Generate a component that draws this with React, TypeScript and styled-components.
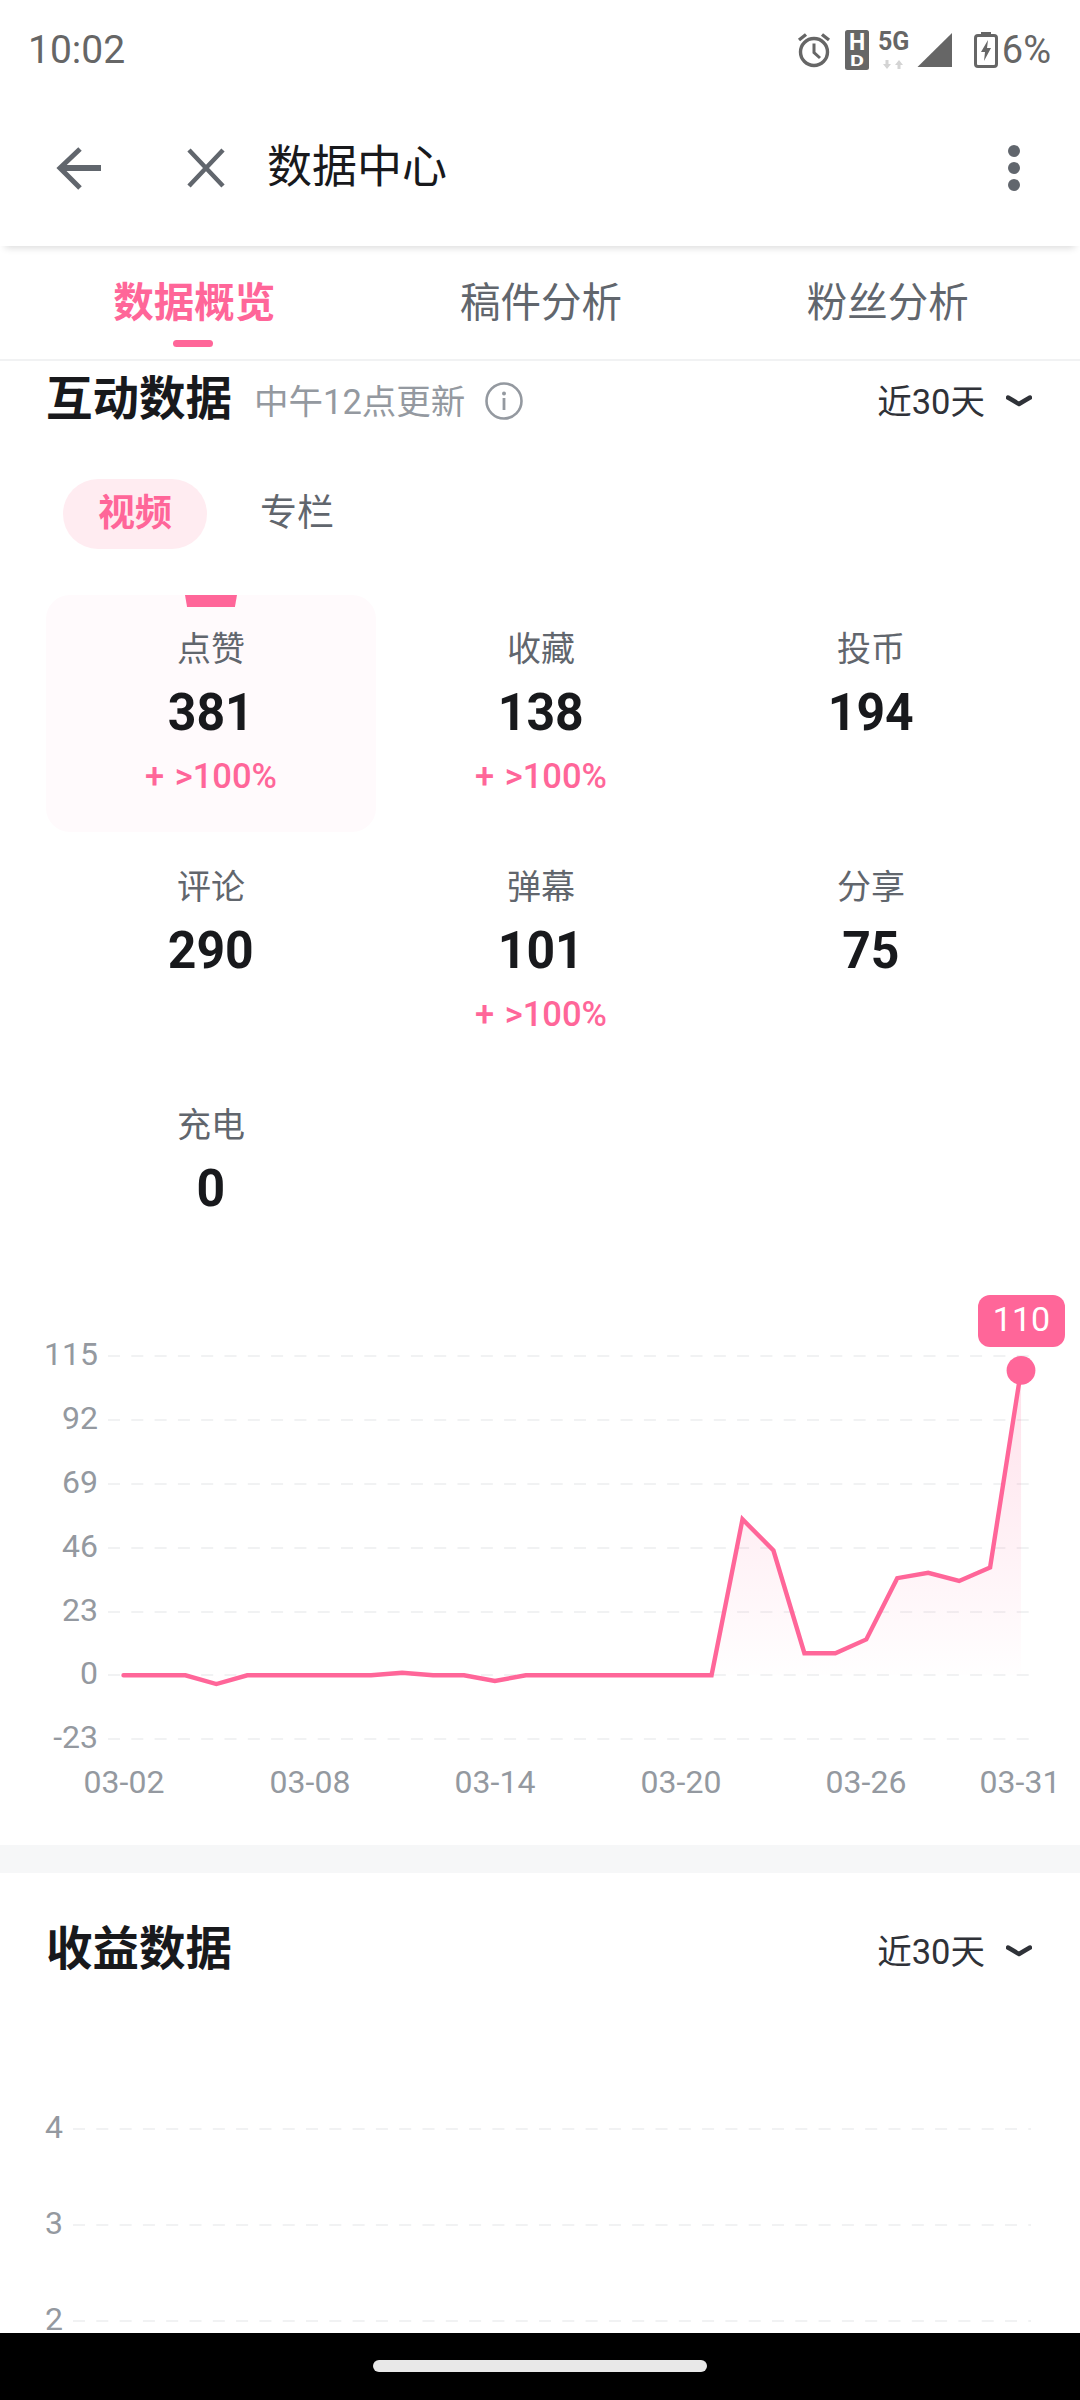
import React from 'react';
import styled, { createGlobalStyle } from 'styled-components';

const pink = '#ff6699';
const grayText = '#61666d';
const lightText = '#9499a0';

const GlobalStyle = createGlobalStyle`
  html, body {
    margin: 0;
    padding: 0;
    background: #fff;
  }
  * {
    box-sizing: border-box;
  }
`;

const stats = [
  { label: '点赞', value: '381', change: '+ >100%', active: true },
  { label: '收藏', value: '138', change: '+ >100%' },
  { label: '投币', value: '194' },
  { label: '评论', value: '290' },
  { label: '弹幕', value: '101', change: '+ >100%' },
  { label: '分享', value: '75' },
  { label: '充电', value: '0' },
];

const base = 1675.3;
const lineYs: number[] = [
  base, base, base, 1684, base, base, base, base, base, 1672.8, base, base, 1681, base, base,
  base, base, base, base, base, 1519.3, 1550.5, 1653.2, 1653.2, 1639.4, 1578.2, 1572.8, 1580.9, 1567.4, 1370.3,
];
const lineXs = lineYs.map((_, i) => 123.5 + i * 30.95);
const linePoints = lineYs.map((y, i) => `${lineXs[i]},${y}`).join(' ');
const areaPoints = `123.5,${base} ${linePoints} ${lineXs[29]},${base}`;

const yTicks = [
  { label: '115', y: 1356 },
  { label: '92', y: 1420 },
  { label: '69', y: 1484 },
  { label: '46', y: 1548 },
  { label: '23', y: 1612 },
  { label: '0', y: 1675 },
  { label: '-23', y: 1739 },
];
const xTicks = [
  { label: '03-02', x: 124 },
  { label: '03-08', x: 310 },
  { label: '03-14', x: 495 },
  { label: '03-20', x: 681 },
  { label: '03-26', x: 866 },
  { label: '03-31', x: 1020 },
];
const incomeTicks = [
  { label: '4', y: 2129 },
  { label: '3', y: 2225 },
  { label: '2', y: 2321 },
];

const Chevron = () => (
  <ChevronIcon viewBox="0 0 26 12">
    <path d="M2 2.5 Q8 6 13 9 Q18 6 24 2.5" fill="none" stroke="#2f3238" strokeWidth="4.4" strokeLinecap="round" strokeLinejoin="round" />
  </ChevronIcon>
);

const RangePicker = () => (
  <Range>
    <span>近30天</span>
    <Chevron />
  </Range>
);

export default function App() {
  return (
    <Page>
      <GlobalStyle />
      <StatusBar>
        <Clock>10:02</Clock>
        <StatusIcons>
          <svg width="36" height="36" viewBox="0 0 36 36">
            <circle cx="18" cy="20" r="13.5" fill="none" stroke="#666" strokeWidth="3.4" />
            <path d="M18 11.5 V20.5 L24 26" fill="none" stroke="#666" strokeWidth="3" />
            <path d="M3 8 L10 2.5 M33 8 L26 2.5" fill="none" stroke="#666" strokeWidth="3.4" />
          </svg>
          <HdIcon width="24" height="40" viewBox="0 0 24 40">
            <rect width="24" height="40" rx="2.5" fill="#666" />
            <text x="12" y="20" textAnchor="middle" fontSize="23">H</text>
            <text x="12" y="36" textAnchor="middle" fontSize="15" textLength="14" lengthAdjust="spacingAndGlyphs">D</text>
          </HdIcon>
          <NetworkIcon width="32" height="40" viewBox="0 0 32 40">
            <text x="0" y="20">5G</text>
            <path d="M9 39 L5 34 H7.5 V30 H10.5 V34 H13 Z" fill="#d4d4d4" />
            <path d="M21 30 L25 35 H22.5 V39 H19.5 V35 H17 Z" fill="#d4d4d4" />
          </NetworkIcon>
          <SignalIcon width="36" height="36" viewBox="0 0 36 36">
            <path d="M35 1 V35 H0.5 Z" fill="#666" />
          </SignalIcon>
          <BatteryIcon width="24" height="36" viewBox="0 0 24 36">
            <rect x="7" y="0" width="10" height="4" fill="#666" />
            <rect x="1.5" y="3.5" width="21" height="31" rx="2.5" fill="none" stroke="#666" strokeWidth="3" />
            <path d="M14 8 L7 20 H11 L10 29 L17 16 H13 Z" fill="#666" />
          </BatteryIcon>
          <Percent>6%</Percent>
        </StatusIcons>
      </StatusBar>

      <AppBar>
        <svg width="50" height="46" viewBox="0 0 50 46">
          <path d="M26 4 L6 23 L26 43" fill="none" stroke={grayText} strokeWidth="5" />
          <path d="M7 23 H47" fill="none" stroke={grayText} strokeWidth="6" />
        </svg>
        <CloseIcon width="42" height="40" viewBox="0 0 42 40">
          <path d="M4 2 L38 38 M38 2 L4 38" fill="none" stroke={grayText} strokeWidth="4.5" />
        </CloseIcon>
        <Title>数据中心</Title>
        <MoreDots>
          <i />
          <i />
          <i />
        </MoreDots>
      </AppBar>

      <Tabs>
        <Tab $active>
          数据概览
          <TabMark />
        </Tab>
        <Tab>稿件分析</Tab>
        <Tab>粉丝分析</Tab>
      </Tabs>

      <Content>
        <SectionHead>
          <SectionTitle>互动数据</SectionTitle>
          <UpdateNote>中午12点更新</UpdateNote>
          <InfoIcon width="38" height="38" viewBox="0 0 38 38">
            <circle cx="19" cy="19" r="17.5" fill="none" stroke={lightText} strokeWidth="2.6" />
            <circle cx="19" cy="11.5" r="2" fill={lightText} />
            <path d="M19 16 V28" stroke={lightText} strokeWidth="2.8" />
          </InfoIcon>
          <RangePicker />
        </SectionHead>

        <Segments>
          <Segment $active>视频</Segment>
          <Segment>专栏</Segment>
        </Segments>

        <StatGrid>
          {stats.map(s => (
            <StatCell key={s.label} $active={s.active}>
              {s.active && <CellMark />}
              <StatLabel>{s.label}</StatLabel>
              <StatValue>{s.value}</StatValue>
              {s.change && <StatChange>{s.change}</StatChange>}
            </StatCell>
          ))}
        </StatGrid>

        <ChartSvg width="1080" height="555" viewBox="0 1290 1080 555">
          <defs>
            <linearGradient id="area" x1="0" y1="0" x2="0" y2="1">
              <stop offset="0" stopColor={pink} stopOpacity="0.2" />
              <stop offset="1" stopColor={pink} stopOpacity="0" />
            </linearGradient>
          </defs>
          {yTicks.map(t => (
            <g key={t.label}>
              <GridLine x1="108" x2="1037" y1={t.y} y2={t.y} />
              <AxisText x="98" y={t.y + 9} textAnchor="end">{t.label}</AxisText>
            </g>
          ))}
          {xTicks.map(t => (
            <AxisText key={t.label} x={t.x} y="1793" textAnchor="middle">{t.label}</AxisText>
          ))}
          <polygon points={areaPoints} fill="url(#area)" />
          <polyline points={linePoints} fill="none" stroke={pink} strokeWidth="4.4" strokeLinecap="round" strokeLinejoin="miter" />
          <circle cx="1021" cy="1370.4" r="14.4" fill={pink} />
          <rect x="978" y="1295" width="87" height="52" rx="12" fill={pink} />
          <BadgeText x="1021.5" y="1331" textAnchor="middle">110</BadgeText>
        </ChartSvg>

        <Band />

        <IncomeHead>
          <SectionTitle>收益数据</SectionTitle>
          <RangePicker />
        </IncomeHead>

        <ChartSvg width="1080" height="320" viewBox="0 2025 1080 320">
          {incomeTicks.map(t => (
            <g key={t.label}>
              <GridLine x1="73" x2="1031" y1={t.y} y2={t.y} />
              <AxisText x="63" y={t.y + 9} textAnchor="end">{t.label}</AxisText>
            </g>
          ))}
        </ChartSvg>
      </Content>

      <NavBar>
        <NavPill />
      </NavBar>
    </Page>
  );
}

const Page = styled.div`
  width: 1080px;
  height: 2400px;
  display: flex;
  flex-direction: column;
  overflow: hidden;
  background: #fff;
  font-family: Roboto, "Noto Sans CJK SC", sans-serif;
`;

const StatusBar = styled.div`
  height: 100px;
  flex: none;
  display: flex;
  align-items: center;
  justify-content: space-between;
  padding: 0 29px 0 28px;
  color: #666;
`;

const Clock = styled.span`
  font-size: 39px;
`;

const StatusIcons = styled.div`
  display: flex;
  align-items: center;
`;

const HdIcon = styled.svg`
  margin-left: 13px;
  text {
    font-family: Roboto, sans-serif;
    font-weight: 700;
    fill: #fff;
  }
`;

const NetworkIcon = styled.svg`
  margin-left: 9px;
  overflow: visible;
  text {
    font: 700 25px Roboto, sans-serif;
    fill: #666;
  }
`;

const SignalIcon = styled.svg`
  margin-left: 7px;
`;

const BatteryIcon = styled.svg`
  margin-left: 21px;
`;

const Percent = styled.span`
  font-size: 38px;
  margin-left: 4px;
`;

const AppBar = styled.div`
  position: relative;
  z-index: 2;
  height: 146px;
  flex: none;
  display: flex;
  align-items: center;
  padding: 0 60px 10px 54px;
  background: #fff;
  box-shadow: 0 7px 7px -5px rgba(0, 0, 0, 0.14);
`;

const CloseIcon = styled.svg`
  margin-left: 81px;
`;

const Title = styled.div`
  margin-left: 40px;
  flex: 1;
  font-size: 45px;
  line-height: 60px;
  color: #18191c;
`;

const MoreDots = styled.div`
  display: flex;
  flex-direction: column;
  gap: 5px;
  i {
    display: block;
    width: 12px;
    height: 12px;
    border-radius: 50%;
    background: ${grayText};
  }
`;

const Tabs = styled.div`
  height: 115px;
  flex: none;
  display: flex;
  padding: 0 19px 0 21px;
  border-bottom: 2px solid #f1f2f3;
`;

const Tab = styled.div<{ $active?: boolean }>`
  position: relative;
  flex: 1;
  display: flex;
  align-items: center;
  justify-content: center;
  padding-bottom: 6px;
  font-size: 40.5px;
  font-weight: ${p => (p.$active ? 700 : 400)};
  color: ${p => (p.$active ? pink : grayText)};
`;

const TabMark = styled.i`
  position: absolute;
  left: 50%;
  bottom: 12px;
  width: 40px;
  height: 7px;
  margin-left: -21px;
  border-radius: 4px;
  background: ${pink};
`;

const Content = styled.main`
  flex: 1;
  min-height: 0;
  overflow: hidden;
`;

const SectionHead = styled.div`
  height: 76px;
  display: flex;
  align-items: center;
  padding: 0 48px 0 46px;
`;

const IncomeHead = styled(SectionHead)`
  height: 152px;
  justify-content: space-between;
`;

const SectionTitle = styled.h2`
  margin: 0;
  font-size: 46.5px;
  line-height: 60px;
  font-weight: 700;
  color: #18191c;
`;

const UpdateNote = styled.span`
  margin-left: 22px;
  font-size: 34.5px;
  color: ${lightText};
`;

const InfoIcon = styled.svg`
  margin-left: 20px;
  margin-top: 3px;
`;

const Range = styled.div`
  margin-left: auto;
  display: flex;
  align-items: center;
  gap: 21px;
  font-size: 34.5px;
  color: #2f3238;
`;

const ChevronIcon = styled.svg`
  width: 26px;
  height: 12px;
  margin-top: 3px;
`;

const Segments = styled.div`
  display: flex;
  gap: 53px;
  margin: 42px 0 46px 63px;
`;

const Segment = styled.div<{ $active?: boolean }>`
  height: 70px;
  display: flex;
  align-items: center;
  padding: 0 ${p => (p.$active ? '35px' : '0')} 9px;
  border-radius: 35px;
  font-size: 37px;
  font-weight: ${p => (p.$active ? 700 : 400)};
  color: ${p => (p.$active ? pink : grayText)};
  background: ${p => (p.$active ? '#ffecf1' : 'transparent')};
`;

const StatGrid = styled.div`
  display: grid;
  grid-template-columns: repeat(3, 330px);
  grid-template-rows: 238px 238px 219px;
  padding-left: 46px;
`;

const StatCell = styled.div<{ $active?: boolean }>`
  position: relative;
  height: 237px;
  display: flex;
  flex-direction: column;
  align-items: center;
  padding-top: 32px;
  border-radius: 24px;
  background: ${p => (p.$active ? '#fffafc' : 'transparent')};
`;

const CellMark = styled.i`
  position: absolute;
  top: 0;
  left: 139px;
  width: 52px;
  height: 12px;
  background: ${pink};
  clip-path: polygon(0 0, 100% 0, 96% 100%, 4% 100%);
`;

const StatLabel = styled.div`
  font-size: 34px;
  line-height: 44px;
  color: ${grayText};
`;

const StatValue = styled.div`
  margin-top: 9px;
  font-size: 52px;
  line-height: 66px;
  font-weight: 700;
  color: #18191c;
  transform: scaleX(0.96);
`;

const StatChange = styled.div`
  margin-top: 8px;
  font-size: 34.5px;
  font-weight: 500;
  word-spacing: 2px;
  line-height: 44px;
  color: ${pink};
`;

const ChartSvg = styled.svg`
  display: block;
`;

const GridLine = styled.line`
  stroke: #f1f2f3;
  stroke-width: 2;
  stroke-dasharray: 12 11.3;
`;

const AxisText = styled.text`
  font: 400 32px Roboto, sans-serif;
  fill: ${lightText};
`;

const BadgeText = styled.text`
  font: 400 34px Roboto, sans-serif;
  fill: #fff;
`;

const Band = styled.div`
  height: 28px;
  background: #f6f7f8;
`;

const NavBar = styled.div`
  height: 67px;
  flex: none;
  display: flex;
  justify-content: center;
  padding-top: 27px;
  background: #000;
`;

const NavPill = styled.div`
  width: 334px;
  height: 12px;
  border-radius: 6px;
  background: #e8e8e8;
`;
